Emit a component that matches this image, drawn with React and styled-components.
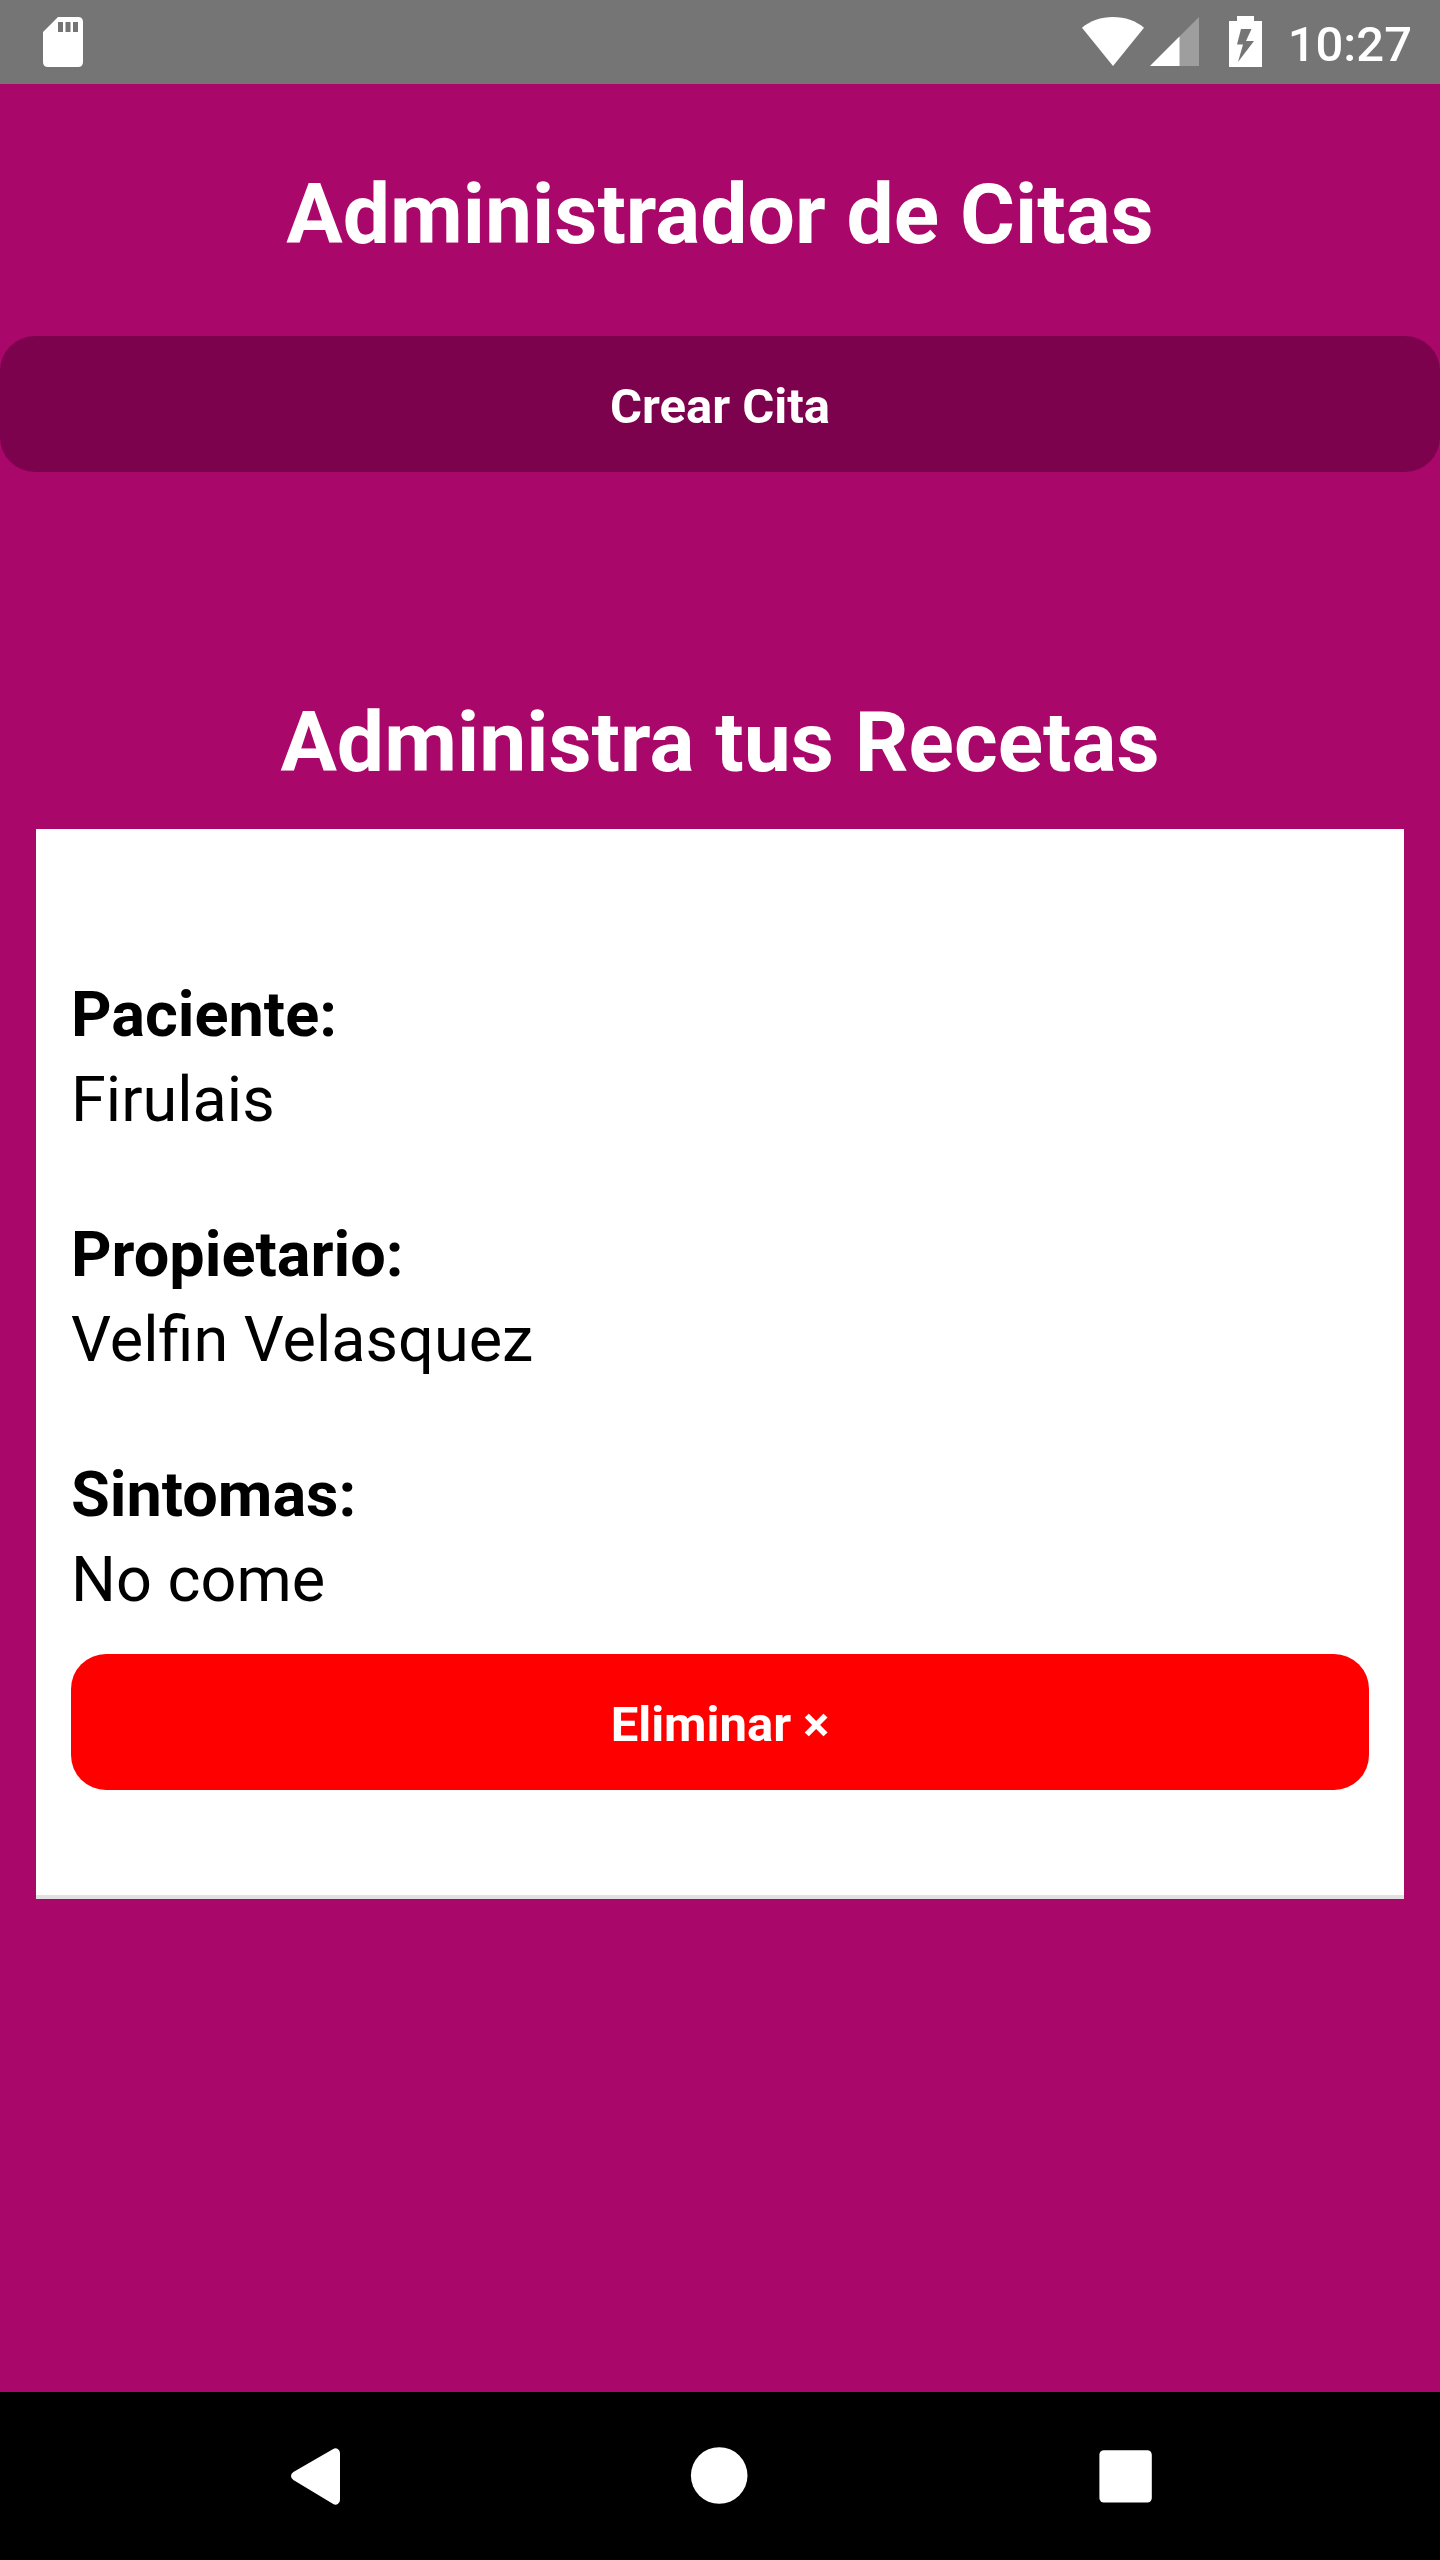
import React from "react";
import styled, { createGlobalStyle } from "styled-components";

const GlobalStyle = createGlobalStyle`
  * { box-sizing: border-box; }
  body { margin: 0; background: #aa076b; }
`;

const Screen = styled.div`
  display: flex;
  flex-direction: column;
  width: 1440px;
  height: 2560px;
  background: #aa076b;
  font-family: Roboto, "Liberation Sans", sans-serif;
`;

const StatusBar = styled.header`
  display: flex;
  justify-content: space-between;
  height: 84px;
  padding: 0 28px 0 43px;
  background: #757575;
  color: #fff;
`;

const StatusGroup = styled.div`
  display: flex;
  align-items: flex-start;
`;

const StatusIcon = styled.svg`
  display: block;
  flex: none;
  margin: ${(p) => p.$top}px ${(p) => p.$right || 0}px 0 0;
`;

const Clock = styled.time`
  font-size: 49px;
  font-weight: 500;
  line-height: 58px;
  padding-top: 16px;
`;

const Content = styled.main`
  display: flex;
  flex: 1;
  flex-direction: column;
`;

const Title = styled.h1`
  margin: 0;
  padding-top: 5px;
  color: #fff;
  font-size: 84px;
  font-weight: 700;
  line-height: 112px;
  text-align: center;
`;

const Header = styled.div`
  padding: 70px 0 65px;
`;

const Button = styled.button`
  display: block;
  width: 100%;
  height: 136px;
  padding: 38px 35px 32px;
  border: 0;
  border-radius: 35px;
  background: ${(p) => p.$color};
  color: #fff;
  font-family: inherit;
  font-size: 49px;
  font-weight: 700;
  line-height: 66px;
  text-align: center;
`;

const Appointments = styled.section`
  display: flex;
  flex-direction: column;
  gap: 30px;
  padding: 210px 36px 0;
`;

const Card = styled.article`
  display: flex;
  flex-direction: column;
  padding: 143px 35px 105px;
  border-bottom: 4px solid #e1e1e1;
  background: #fff;
`;

const Fields = styled.dl`
  display: flex;
  flex-direction: column;
  gap: 70px;
  margin: 0 0 32px;
`;

const Field = styled.div`
  color: #000;
  font-size: 63px;
  line-height: 85px;
`;

const Label = styled.dt`
  font-weight: 700;
`;

const Value = styled.dd`
  margin: 0;
`;

const NavBar = styled.nav`
  display: flex;
  justify-content: space-between;
  height: 168px;
  padding: 54px 287px 0 290px;
  background: #000;
`;

const fields = [
  ["Paciente:", "Firulais"],
  ["Propietario:", "Velfin Velasquez"],
  ["Sintomas:", "No come"],
];

export default function App() {
  return (
    <Screen>
      <GlobalStyle />
      <StatusBar>
        <StatusIcon $top={17} width="40" height="50" viewBox="0 0 40 50" fill="#fff">
          <path
            fillRule="evenodd"
            d="M15 0H35Q40 0 40 5V45Q40 50 35 50H5Q0 50 0 45V15ZM15 5V15H20V5ZM22.5 5V15H27.5V5ZM30 5V15H35V5Z"
          />
        </StatusIcon>
        <StatusGroup>
          <StatusIcon $top={16} $right={6} width="62" height="50" viewBox="0 0 62 50" fill="#fff">
            <path d="M0 11.7C8 5 19 1 31 1S54 5 62 11.7L31 50Z" />
          </StatusIcon>
          <StatusIcon $top={17} $right={30} width="49" height="49" viewBox="0 0 49 49">
            <path d="M49 0V49H0Z" fill="#fff" fillOpacity="0.3" />
            <path d="M29.5 19.5V49H0Z" fill="#fff" />
          </StatusIcon>
          <StatusIcon $top={16} $right={26} width="33" height="51" viewBox="0 0 33 51" fill="#fff">
            <path
              fillRule="evenodd"
              d="M8 0H25V5H33V51H0V5H8ZM12 13L8 28.5H14L9 46L25 25H17L22.5 13Z"
            />
          </StatusIcon>
          <Clock>10:27</Clock>
        </StatusGroup>
      </StatusBar>
      <Content>
        <Header>
          <Title>Administrador de Citas</Title>
        </Header>
        <Button $color="#7d024e">Crear Cita</Button>
        <Appointments>
          <Title as="h2">Administra tus Recetas</Title>
          <Card>
            <Fields>
              {fields.map(([label, value]) => (
                <Field key={label}>
                  <Label>{label}</Label>
                  <Value>{value}</Value>
                </Field>
              ))}
            </Fields>
            <Button $color="#ff0000">Eliminar ×</Button>
          </Card>
        </Appointments>
      </Content>
      <NavBar>
        <svg width="50" height="60" viewBox="0 0 50 60" fill="#fff">
          <path d="M43.2 3.1Q45.5 1.5 47.8 3Q50 4.5 50 7V54Q50 56.5 47.8 58Q45.5 59.3 43.2 57.9L3.4 34Q1 32.4 1 30Q1 27.5 3.4 26Z" />
        </svg>
        <svg width="60" height="60" viewBox="0 0 60 60" fill="#fff">
          <circle cx="29.2" cy="29.5" r="28.3" />
        </svg>
        <svg width="54" height="60" viewBox="0 0 54 60" fill="#fff">
          <rect x="0.4" y="4.2" width="52.4" height="52.4" rx="4.5" />
        </svg>
      </NavBar>
    </Screen>
  );
}
